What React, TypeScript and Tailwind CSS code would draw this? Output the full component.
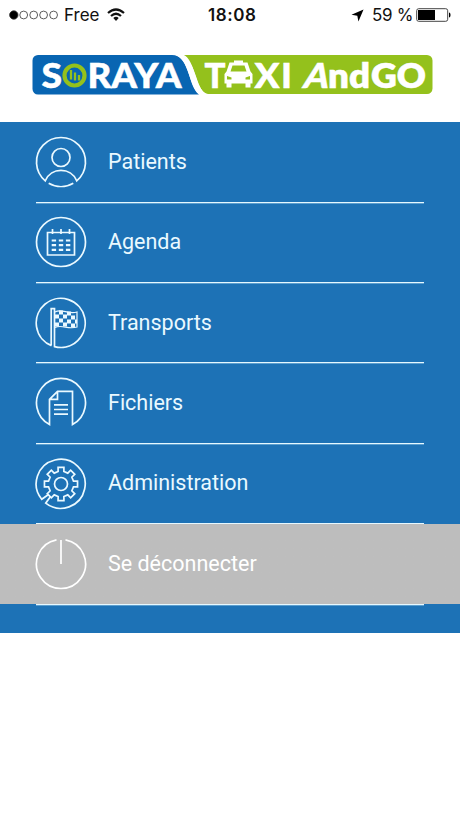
import React from "react";

function Logo() {
  const glyph = { lengthAdjust: "spacingAndGlyphs" as const };
  return (
    <svg width="402" height="42" viewBox="31 54 402 42" fontFamily="Lato, sans-serif" fontWeight="900" fill="#fff">
      <path d="M182 55H427a5.500 5.500 0 0 1 5.500 5.500V88.500a5.500 5.500 0 0 1-5.500 5.500H208C195 91 199 66 182 55Z" fill="#94c11c" />
      <path d="M38 55H172C189 55 188 84 199 94.500H38a5.500 5.500 0 0 1-5.500-5.500V60.500A5.500 5.500 0 0 1 38 55Z" fill="#0865b2" />
      <path d="M174 54.500H183C196 60 194 88 207 94.500H199C188 86 190 58 174 54.500Z" />
      <g fontSize="34.500" stroke="#fff" strokeWidth=".5">
        <text x="41.500" y="88" textLength="20.500" {...glyph}>S</text>
        <text x="87.500" y="88" textLength="94" {...glyph}>RAYA</text>
        <text x="204.500" y="88" textLength="21" {...glyph}>T</text>
        <text x="254.500" y="88" textLength="25" {...glyph}>X</text>
        <text x="281" y="88" textLength="11" {...glyph}>I</text>
        <text transform="translate(302 88) skewX(-13)" textLength="25" {...glyph}>A</text>
        <text x="328" y="88" textLength="42" fontWeight="800" {...glyph}>nd</text>
        <text x="371" y="88" textLength="55" fontWeight="800" {...glyph}>GO</text>
      </g>
      <circle cx="74.500" cy="75.500" r="10" fill="none" stroke="#94c11c" strokeWidth="4.200" />
      <path d="M71 70v9.500M75 72.500v8M79 75v5.500" stroke="#94c11c" strokeWidth="2.300" />
      <path fillRule="evenodd" d="M234 60.500h9v2h4.500l3 9 2 2.500v9.500h-2v4h-5v-4H231.500v4h-5v-4h-2v-9.500l2-2.500 3-9h4.500ZM232.500 65.500l-2 6h16l-2-6ZM227 76v3.500h4.500v-2ZM250 76v3.500h-4.500v-2Z" />
    </svg>
  );
}

const ring = <circle r="24.500" />;

const patients = (
  <>
    <path d="M-15.700 18.800A24.500 24.500 0 1 1 15.700 18.800C10 5-10 5-15.700 18.800Z" />
    <circle cy="-4.500" r="9" />
    <path d="M-12.300 21.200A24.500 24.500 0 0 0 12.300 21.200" />
  </>
);

const agenda = (
  <>
    {ring}
    <path d="M-13.500-9.500h27v22.500h-27ZM-8.500-13v5M0-13v5M8.500-13v5" />
    <path d="M-9.300-1.500h18.600M-9.300 3.200h18.600M-9.300 7.900h18.600" strokeWidth="2.200" strokeDasharray="4.400 2.700" />
  </>
);

const transports = (
  <>
    <path d="M-9.500 22.600A24.500 24.500 0 1 1-6.500 23.600V-14.300H-9.800V22.500" />
    <path d="M-6-11C1-15 7-8 16-11V4C7 7 1 1-6 4.500" strokeWidth="1.200" />
    <path fill="currentColor" stroke="none" d="M-2-12.500h4v4h-4ZM6-11.500h4v4H6ZM-6-8.500h4v4h-4ZM2-8.500h4v4H2ZM10-7.500h4v4h-4ZM-2-4.500h4v4h-4ZM6-3.500h4v4H6ZM14-3.500h2v4h-2ZM-6-.500h4v4h-4ZM2-.500h4v4H2ZM10 .500h4v4h-4Z" />
  </>
);

const fichiers = (
  <path d="M-11.500 21.600A24.500 24.500 0 1 1 11.500 21.600V-11.700H-3.500L-11.500-3.700ZM-3.500-11.700V-3.700h-8M-7 1.800H7M-7 6.500H7M-7 11.200H7" />
);

const teeth = Array.from({ length: 8 }, (_, i) => {
  const point = (r: number, offset: number) => {
    const a = ((i * 45 - 90 + offset) * Math.PI) / 180;
    return `${(r * Math.cos(a)).toFixed(2)} ${(r * Math.sin(a)).toFixed(2)}`;
  };
  return [point(12.8, -13), point(16.8, -10), point(16.8, 10), point(12.8, 13)].join("L");
}).join("L");

const administration = (
  <>
    <path d={`M${teeth}Z`} />
    <circle r="6.500" />
    <path d="M-12.500 10.500L-19.300 15.300A24.500 24.500 0 1 1-15.300 19.200L-10.500 12.500" />
  </>
);

const deconnecter = <path d="M-4.500-24.100A24.500 24.500 0 1 0 4.500-24.100M0-24V0" />;

const items = [
  { label: "Patients", icon: patients },
  { label: "Agenda", icon: agenda },
  { label: "Transports", icon: transports },
  { label: "Fichiers", icon: fichiers },
  { label: "Administration", icon: administration },
  { label: "Se déconnecter", icon: deconnecter, active: true },
];

function StatusBar() {
  return (
    <header className="flex h-[30px] items-center text-[17px] leading-none text-[#111]">
      <div className="flex w-[208px] items-center pl-[9px]">
        <svg width="50" height="10" viewBox="0 0 50 10" fill="none" stroke="#333" strokeWidth=".8">
          <circle cx="4.800" cy="5" r="4.200" fill="#000" />
          <circle cx="14.700" cy="5" r="3.900" /><circle cx="24.700" cy="5" r="3.900" />
          <circle cx="34.600" cy="5" r="3.900" /><circle cx="44.600" cy="5" r="3.900" />
        </svg>
        <span className="ml-[5px] w-[35px]">Free</span>
        <svg className="ml-[8px]" width="18" height="14" viewBox="0 0 18 14" fill="none" stroke="#111" strokeWidth="2.200">
          <path d="M1 5Q9-2 17 5M4 8Q9 3.500 14 8" />
          <path d="M6.300 10Q9 7.500 11.700 10L9 13Z" fill="#111" stroke="none" />
        </svg>
      </div>
      <span className="w-[143px] text-[17px] font-semibold tracking-[0.600px]">18:08</span>
      <svg width="13" height="13" viewBox="0 0 14 14"><path d="M13.500.500L8 13.500 6.800 7.300.500 6.300Z" /></svg>
      <span className="ml-2 w-[42px] whitespace-nowrap text-[17px] tracking-[-0.300px]">59 %</span>
      <svg className="ml-[2px]" width="36" height="14" viewBox="0 0 36 14">
        <rect x=".7" y=".7" width="31" height="12.600" rx="2" fill="none" stroke="#444" />
        <path d="M2 2h17v10H2ZM33 4.500c2 0 2 5 0 5Z" />
      </svg>
    </header>
  );
}

export default function App() {
  return (
    <main className="h-[818px] w-[460px] overflow-hidden bg-white font-['Inter',sans-serif]">
      <StatusBar />
      <div className="flex h-[92.300px] pt-6 pl-[31px]"><Logo /></div>
      <nav className="h-[511.200px] bg-[#1d72b6] font-['Roboto',sans-serif] text-[#eaf9ff]">
        {items.map(({ label, icon, active }) => (
          <div key={label} className={active ? "h-[80.400px] bg-linear-to-b from-[#bdbdbd] from-99% to-[#1d72b6] to-99% text-white" : "h-[80.400px]"}>
            <a className="mx-9 flex h-full items-center border-b border-[#e6f8ff] shadow-[0_1px_0_rgba(213,243,255,0.35)]">
              <svg className="-ml-px shrink-0" width="52" height="52" viewBox="-26 -26 52 52" fill="none" stroke="currentColor" strokeWidth="1.700">
                {icon}
              </svg>
              <span className="ml-[21px] pb-px text-[21.500px] leading-none whitespace-nowrap">{label}</span>
            </a>
          </div>
        ))}
      </nav>
    </main>
  );
}
